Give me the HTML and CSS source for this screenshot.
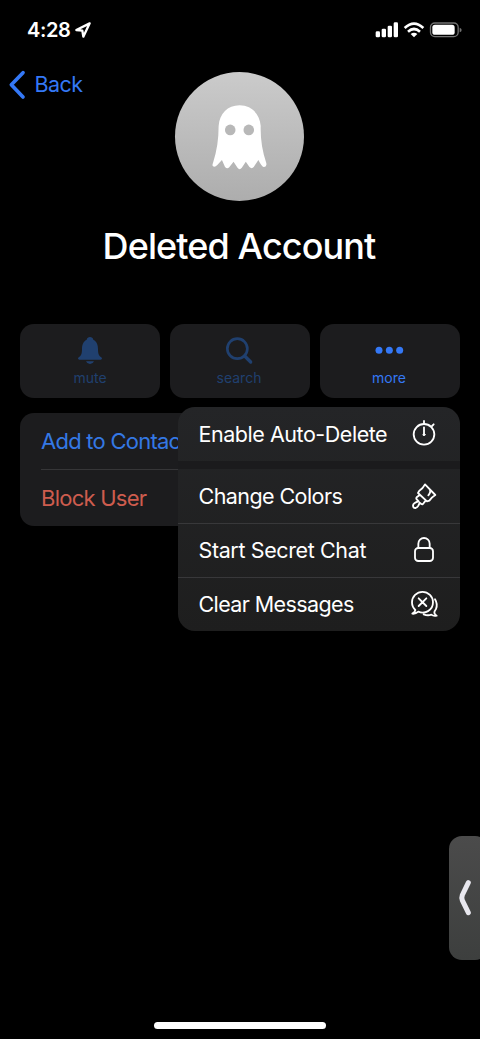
FILE: index.html
```html
<!DOCTYPE html>
<html lang="en">
<head>
<meta charset="utf-8">
<title>Deleted Account</title>
<link rel="stylesheet" href="styles.css">
</head>
<body>
<div class="screen">
  <header class="status">
    <span class="time">4:28</span>
    <svg class="location" viewBox="0 0 48 48"><path d="M44 4 L4 24 L22 26 L25 44 Z"/></svg>
    <svg class="signals" viewBox="0 0 264 48">
      <g fill="#fff"><rect x="2" y="28" width="13" height="18" rx="4"/><rect x="20" y="20" width="13" height="26" rx="4"/><rect x="38" y="11" width="13" height="35" rx="4"/><rect x="56" y="1" width="13" height="45" rx="4"/></g>
      <g fill="none" stroke="#fff" stroke-width="8"><path d="M89 18 Q117 -8 145 18"/><path d="M99 29 Q117 13 135 29"/></g>
      <path fill="#fff" d="M107 36 Q117 28 127 36 L117 46Z"/>
      <rect x="166.500" y="3" width="83" height="41" rx="13" fill="none" stroke="#737373" stroke-width="4"/>
      <rect x="172" y="8.500" width="67" height="30" rx="8" fill="#fff"/>
      <path fill="#737373" d="M254 17 Q260 20 260 24 Q260 29 254 31Z"/>
    </svg>
  </header>

  <section class="profile">
    <a class="back"><svg viewBox="0 0 48 84"><path d="M42 5 L7 41 L42 78"/></svg><span>Back</span></a>
    <div class="avatar">
      <svg viewBox="140 134 166 194"><path fill="#fff" d="M223 134 C259 134 284 160 287 196 C286 235 291 270 304 309 Q306 321 296 320 Q290 319 280 299 L266 320 Q260 327 253 320 L242 304 L230 322 Q223 331 217 322 L205 304 L192 321 Q185 327 179 319 L170 299 L156 314 Q149 322 143 318 Q140 315 143 308 C155 270 160 235 160 196 C163 160 187 134 223 134Z"/><circle cx="195" cy="208" r="16" fill="#b8b8b8"/><circle cx="251" cy="208" r="16" fill="#b8b8b8"/></svg>
    </div>
  </section>
  <h1 class="name"><span>Deleted Account</span></h1>

  <nav class="actions">
    <div class="action muted">
      <svg viewBox="0 0 90 90"><path fill="currentColor" d="M45 3 C50 3 54 6 55 11 C66 17 69 27 69 39 C69 53 71 59 79 64 Q84 70 77 71 H13 Q6 70 11 64 C19 59 21 53 21 39 C21 27 24 17 35 11 C36 6 40 3 45 3Z M33 76 H57 Q54 84 45 84 Q36 84 33 76Z"/></svg>
      <span>mute</span>
    </div>
    <div class="action muted">
      <svg viewBox="2 0 90 90"><circle cx="39" cy="38" r="30" fill="none" stroke="currentColor" stroke-width="8"/><path d="M61 60 L79 78" fill="none" stroke="currentColor" stroke-width="10" stroke-linecap="round"/></svg>
      <span class="nudged">search</span>
    </div>
    <div class="action">
      <svg viewBox="0 0 90 90"><g fill="currentColor"><circle cx="12" cy="43" r="10.500"/><circle cx="43" cy="43" r="10.500"/><circle cx="74" cy="43" r="10.500"/></g></svg>
      <span class="nudged">more</span>
    </div>
  </nav>

  <div class="list">
    <div class="row add"><span>Add to Contacts</span></div>
    <div class="row block"><span>Block User</span></div>
  </div>

  <div class="menu">
    <div class="item first"><span class="t-enable">Enable Auto-Delete</span>
      <svg viewBox="0 0 84 84"><circle cx="42" cy="43" r="31"/><path d="M42 12 V3 M66 18 L71 13 M42 22 V42"/><circle cx="42" cy="44" r="3" fill="#fff" stroke-width="3"/></svg></div>
    <div class="item"><span class="t-colors">Change Colors</span>
      <svg viewBox="0 -2 84 84"><path d="M45 5 L76 37 Q67 42 58 54 L51 56 L24 31 L28 24 Q39 17 45 5Z M59 20 Q64 28 55 38 M29 37 L20 44 Q17 48 22 52 L26 56 Q10 60 9 68 Q9 77 17 76 Q25 73 29 60 L34 64 Q38 67 42 60 L47 54"/></svg></div>
    <div class="item"><span class="t-secret">Start Secret Chat</span>
      <svg viewBox="0 0 84 84"><rect x="15" y="36" width="54" height="39" rx="10"/><path d="M25 36 V23 A17 17 0 0 1 59 23 V36"/></svg></div>
    <div class="item"><span class="t-clear">Clear Messages</span>
      <svg viewBox="0 0 84 84"><path d="M16 60 Q6 51 6 37 A31.500 31.500 0 0 1 69 37 C69 62 44 73 25 65 Q17 72 7 71 Q15 67 16 60Z M26 25 L49 48 M49 25 L26 48 M75 28 Q84 43 78 57 Q73 63 73 69 Q75 74 80 77 Q70 79 64 74 Q53 78 41 73"/></svg></div>
  </div>

  <div class="side-tab"><svg viewBox="0 0 39 108"><path d="M31 8 L13 45 Q10 53 13 61 L31 98"/></svg></div>
  <div class="home-bar"></div>
</div>
</body>
</html>
```

FILE: styles.css
```css
* { box-sizing: border-box; }
body { margin: 0; background: #000; }
.screen {
  position: relative;
  width: 480px;
  height: 1039px;
  overflow: hidden;
  display: flex;
  flex-direction: column;
  background: #000;
  color: #fff;
  font-family: Inter, "Liberation Sans", sans-serif;
}
svg { display: block; flex: none; overflow: visible; }
span { white-space: nowrap; }

.status { height: 60px; padding: 0 17px 0 27px; display: flex; align-items: center; }
.time { width: 43px; font-size: 20px; font-weight: 600; letter-spacing: -0.4px; }
.location { width: 16px; height: 16px; margin-left: 5px; }
.location path { fill: none; stroke: #fff; stroke-width: 7; stroke-linejoin: round; }
.signals { width: 88px; height: 16px; margin-left: auto; }

.profile { height: 142px; padding-top: 12px; display: grid; grid-template-columns: 175px 129px; }
.back { height: 25px; display: flex; align-items: center; padding-left: 9px; gap: 9.5px; color: #3478f6; font-size: 21.5px; letter-spacing: -0.55px; }
.back span { padding-bottom: 1px; }
.back svg { width: 16px; height: 28px; }
.back path { fill: none; stroke: currentColor; stroke-width: 11; stroke-linecap: round; stroke-linejoin: round; }
.avatar {
  width: 129px; height: 129px;
  padding-top: 33px;
  display: flex; justify-content: center;
  border-radius: 50%;
  background: linear-gradient(#cbcbcb, #adadad);
}
.avatar svg { width: 55px; height: 65px; }
.name { height: 88px; margin: 0; padding: 22px 2px 0 0; text-align: center; font-size: 36px; line-height: 44px; font-weight: 500; letter-spacing: -0.9px; }

.actions { margin: 34px 20px 0; display: grid; grid-template-columns: repeat(3, 1fr); gap: 10px; }
.action { height: 74px; padding-top: 12px; display: flex; flex-direction: column; align-items: center; border-radius: 14px; background: #1c1c1e; color: #3478f6; font-size: 14px; line-height: 18px; }
.action svg { width: 30px; height: 30px; margin-bottom: 3px; }
.nudged { padding-right: 2px; }
.muted { color: #20406f; }

.list { height: 113px; margin: 15px 20px 0; padding-left: 21px; border-radius: 14px; background: #1c1c1e; font-size: 22px; letter-spacing: -0.75px; }
.row { height: 57px; display: flex; align-items: center; }
.add { color: #3478e5; border-bottom: 1px solid #363638; }
.block { height: 55px; color: #ce5c4e; }

.menu { position: absolute; left: 178px; top: 407px; width: 282px; height: 224px; border-radius: 17px; overflow: hidden; background: linear-gradient(#242527, #1e1e1e); font-size: 21.5px; }
.item { height: 54px; padding: 0 22.5px 1px 20.5px; display: flex; align-items: center; justify-content: space-between; border-top: 1px solid #38383a; }
.item svg { width: 28px; height: 28px; fill: none; stroke: #fff; stroke-width: 5.5; stroke-linecap: round; stroke-linejoin: round; }
.item.first { height: 62px; padding-bottom: 0; border-top: 0; border-bottom: 8px solid #1b1b1d; }
.item.first + .item { padding-bottom: 0; border-top: 0; }
.t-enable { letter-spacing: -0.46px; }
.t-colors { letter-spacing: -0.57px; }
.t-secret { letter-spacing: -0.38px; }
.t-clear { letter-spacing: -0.6px; }

.side-tab { position: absolute; left: 449px; top: 836px; width: 39px; height: 124px; padding: 44px 0 0 9px; border-radius: 13px; background: linear-gradient(#4b4b4b, #3d3f3e); }
.side-tab svg { width: 13px; height: 36px; }
.side-tab path { fill: none; stroke: #e8e7ee; stroke-width: 15; stroke-linecap: round; stroke-linejoin: round; }
.home-bar { width: 172px; height: 7px; margin: auto auto 10px; border-radius: 4px; background: #fff; }
```
